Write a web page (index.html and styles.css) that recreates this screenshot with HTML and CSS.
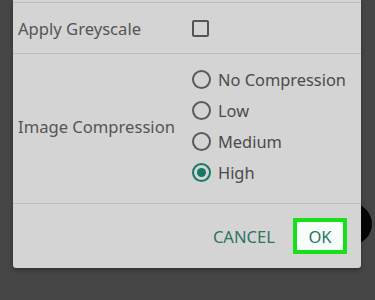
FILE: index.html
```html
<!DOCTYPE html>
<html lang="en">
<head>
  <meta charset="UTF-8" />
  <title>Export Settings</title>
  <link rel="stylesheet" href="styles.css">
</head>
<body>
  <div class="screen">
    <div class="fab"></div>

    <div class="dialog">
      <div class="row row-greyscale">
        <div class="label">Apply Greyscale</div>
        <div class="control">
          <span class="checkbox"></span>
        </div>
      </div>

      <div class="row row-compression">
        <div class="label">Image Compression</div>
        <div class="control options">
          <label class="option"><span class="radio"></span>No Compression</label>
          <label class="option"><span class="radio"></span>Low</label>
          <label class="option"><span class="radio"></span>Medium</label>
          <label class="option"><span class="radio checked"></span>High</label>
        </div>
      </div>

      <div class="actions">
        <button class="btn">CANCEL</button>
        <button class="btn btn-ok">OK</button>
      </div>
    </div>
  </div>
</body>
</html>
```

FILE: styles.css
```css
* {
  margin: 0;
  padding: 0;
  box-sizing: border-box;
  font-family: 'Noto Sans', 'Open Sans', sans-serif;
}

body {
  background: #464646;
  width: 375px;
  height: 300px;
  overflow: hidden;
}

.screen {
  position: relative;
  height: 300px;
  padding-left: 13px;
}

.fab {
  position: absolute;
  left: 330px;
  top: 203px;
  width: 42px;
  height: 42px;
  border-radius: 50%;
  background: #050505;
}

.dialog {
  position: relative;
  width: 348px;
  height: 268px;
  background: #d4d4d4;
  padding-top: 2px;
  border-radius: 0 0 3px 3px;
  box-shadow: 0 2px 4px rgba(0, 0, 0, 0.35);
  color: #555;
}

.row {
  display: grid;
  grid-template-columns: 179px 1fr;
  align-items: center;
  border-top: 1px solid #bdbdbd;
}

.label {
  padding-left: 5px;
  font-size: 16.6px;
}

.row-greyscale {
  height: 51px;
}

.row-compression {
  height: 151px;
  border-bottom: 1px solid #bdbdbd;
  padding: 10px 0 15px;
}

.checkbox {
  display: block;
  width: 17px;
  height: 17px;
  border: 2px solid #555;
  border-radius: 2px;
}

.options {
  display: flex;
  flex-direction: column;
}

.option {
  display: flex;
  align-items: center;
  gap: 7px;
  height: 31px;
  font-size: 16.4px;
  color: #4b4b4b;
}

.radio {
  width: 19px;
  height: 19px;
  border: 2px solid #5a5a5a;
  border-radius: 50%;
  display: flex;
  align-items: center;
  justify-content: center;
  flex-shrink: 0;
}

.radio.checked {
  border-color: #157a64;
}

.radio.checked::after {
  content: "";
  width: 9px;
  height: 9px;
  border-radius: 50%;
  background: #157a64;
}

.actions {
  display: flex;
  justify-content: flex-end;
  align-items: center;
  gap: 18px;
  height: 64px;
  padding-right: 14px;
}

.btn {
  border: none;
  background: none;
  font-size: 16.6px;
  color: #2b7565;
  cursor: pointer;
}

.btn-ok {
  width: 54px;
  height: 36px;
  border: 4px solid #16e01a;
  background: #f7fdf8;
}
```
